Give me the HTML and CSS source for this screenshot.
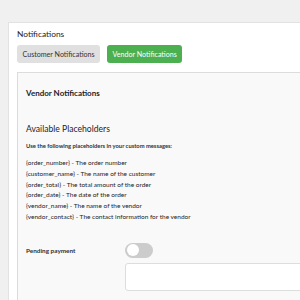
FILE: index.html
```html
<!DOCTYPE html>
<html lang="en">
<head>
    <meta charset="UTF-8">
    <title>Notifications</title>
    <link rel="stylesheet" href="styles.css">
</head>
<body>
    <div class="card">
        <div class="card-title">Notifications</div>
        <div class="tabs">
            <button class="tab">Customer Notifications</button>
            <button class="tab active">Vendor Notifications</button>
        </div>
        <div class="panel">
            <div class="panel-title">Vendor Notifications</div>
            <h2 class="section-title">Available Placeholders</h2>
            <p class="hint">Use the following placeholders in your custom messages:</p>
            <ul class="placeholders">
                <li>{order_number} - The order number</li>
                <li>{customer_name} - The name of the customer</li>
                <li>{order_total} - The total amount of the order</li>
                <li>{order_date} - The date of the order</li>
                <li>{vendor_name} - The name of the vendor</li>
                <li>{vendor_contact} - The contact information for the vendor</li>
            </ul>
            <div class="setting">
                <div class="setting-label">Pending payment</div>
                <div class="setting-field">
                    <span class="toggle"><span class="knob"></span></span>
                    <textarea class="message"></textarea>
                </div>
            </div>
        </div>
    </div>
</body>
</html>
```

FILE: styles.css
```css
/* Global */
body {
    margin: 0;
    padding: 22px 0 0 8px;
    background-color: #f0f0f0;
    font-family: Lato, "Open Sans", Arial, sans-serif;
    color: #2c3338;
    overflow: hidden;
    height: 278px;
}

/* Outer card */
.card {
    width: 420px;
    background-color: #fff;
    border: 1px solid #e2e2e2;
    padding: 4px 0 0 8px;
    height: 400px;
}

.card-title {
    font-size: 8.4px;
    line-height: 14px;
    color: #1d2327;
}

/* Tabs */
.tabs {
    display: flex;
    gap: 7px;
    margin-top: 4px;
}

.tab {
    font-family: inherit;
    font-size: 7.1px;
    height: 18px;
    padding: 0 5.5px;
    border: none;
    border-radius: 3px;
    background-color: #e0e0e0;
    color: #333;
}

.tab.active {
    background-color: #4caf50;
    color: #fff;
}

/* Vendor panel */
.panel {
    margin-top: 9px;
    background-color: #f9f9f9;
    border: 1px solid #dcdcdc;
    padding: 13px 0 0 8px;
    height: 400px;
}

.panel-title {
    font-size: 8px;
    font-weight: 700;
    line-height: 14px;
    color: #1d2327;
}

.section-title {
    font-size: 8.6px;
    font-weight: 400;
    line-height: 16px;
    margin: 21px 0 0;
    color: #1d2327;
}

.hint {
    font-size: 5.8px;
    font-weight: 700;
    margin: 4px 0 0;
    line-height: 10px;
}

.placeholders {
    list-style: none;
    margin: 7px 0 0;
    padding: 0;
    font-size: 6.5px;
    line-height: 10.8px;
    color: #1d2327;
}

/* Setting row */
.setting {
    display: flex;
    margin-top: 20px;
}

.setting-label {
    width: 99px;
    font-size: 6.4px;
    font-weight: 700;
    line-height: 15px;
}

.setting-field {
    display: flex;
    flex-direction: column;
    gap: 5px;
}

.toggle {
    display: flex;
    align-items: center;
    width: 28px;
    height: 15px;
    border-radius: 8px;
    background-color: #ccc;
    padding: 0 2px;
    box-sizing: border-box;
}

.knob {
    width: 12px;
    height: 12px;
    border-radius: 50%;
    background-color: #fff;
}

.message {
    width: 220px;
    height: 28px;
    border: 1px solid #ddd;
    border-radius: 3px;
    background-color: #fff;
    box-sizing: border-box;
    resize: none;
    margin: 0;
}
```
